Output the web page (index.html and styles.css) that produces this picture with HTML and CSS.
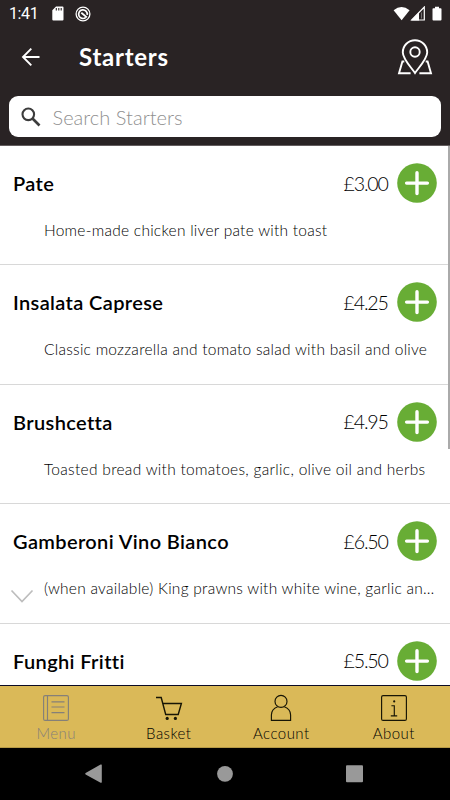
FILE: index.html
```html
<!DOCTYPE html>
<html lang="en">
<head>
<meta charset="utf-8">
<title>Starters</title>
<link rel="stylesheet" href="styles.css">
</head>
<body>
<svg class="defs" width="0" height="0" aria-hidden="true">
  <symbol id="plus" viewBox="0 0 40 40"><circle cx="20" cy="20" r="19.8" fill="#68ad35"/><path d="M20 9.7v20.8M9.6 20.1h20.8" stroke="#fff" stroke-width="3.4" stroke-linecap="round"/></symbol>
</svg>
<div class="app">
  <header class="top">
    <div class="status">
      <span class="clock">1:41</span>
      <svg class="sd" width="12" height="15" viewBox="0 0 12 15"><path d="M4 .4h6.5a1 1 0 0 1 1 1v12a1 1 0 0 1-1 1H1.3a1 1 0 0 1-1-1V4.3z" fill="#fff"/><path d="M4.3 2v2.6M6.8 2v2.6M9.2 2v2.6" stroke="#292324" stroke-width="1.1"/></svg>
      <svg class="ring" width="16" height="16" viewBox="0 0 16 16" fill="none" stroke="#fff"><circle cx="8" cy="8" r="6.9" stroke-width="1.3"/><path d="M10.8 11.4A4.3 4.3 0 1 1 12.2 8.8" stroke-width="1.7"/><path d="M6.3 6.8l5.6 4.6" stroke-width="1.8"/></svg>
      <svg class="signals" width="50" height="16" viewBox="0 0 50 16"><path d="M.6 4.3Q8.5-2.5 16.6 4.3L8.6 14.2z" fill="#fff"/><path d="M18.7 14L31.3 1V14z" fill="none" stroke="#fff" stroke-width="1.2"/><path d="M18 14.5L26 6.2V14.5z" fill="#fff"/><path d="M28.4 6.5v6" stroke="#fff" stroke-width=".8" opacity=".5"/><path d="M42 .8h4v1.4h1.6a.9.9 0 0 1 .9.9v10.5a.9.9 0 0 1-.9.9h-7.2a.9.9 0 0 1-.9-.9V3.1a.9.9 0 0 1 .9-.9H42z" fill="#fff"/></svg>
    </div>
    <div class="bar">
      <svg class="back" width="20" height="20" viewBox="0 0 20 20" fill="none" stroke="#fff" stroke-width="1.9"><path d="M18.5 10H2.5M10.3 1.6L2 10l8.3 8.4"/></svg>
      <h1>Starters</h1>
      <svg class="map" width="36" height="36" viewBox="0 0 36 36" fill="none" stroke="#fff" stroke-width="1.9"><path d="M18 34C14.3 28.5 5.8 19.8 5.8 13.4a12.2 12.2 0 0 1 24.4 0C30.2 19.8 21.7 28.5 18 34z"/><circle cx="18" cy="13" r="4.7"/><path d="M7.3 22.5H5.4L2 34.3h11.6M28.7 22.5h1.9L34 34.3H22.4"/></svg>
    </div>
    <div class="search">
      <svg width="20" height="20" viewBox="0 0 20 20" fill="none" stroke="#3c3c3c"><circle cx="7.3" cy="7.3" r="5.8" stroke-width="2.1"/><path d="M11.5 11.5L18.5 18.5" stroke-width="2.6"/></svg>
      <span>Search Starters</span>
    </div>
  </header>
  <main class="list">
    <article class="item">
      <div class="head"><h2>Pate</h2><span class="price">£3.00</span><svg class="add"><use href="#plus"/></svg></div>
      <p>Home-made chicken liver pate with toast</p>
    </article>
    <article class="item">
      <div class="head"><h2>Insalata Caprese</h2><span class="price">£4.25</span><svg class="add"><use href="#plus"/></svg></div>
      <p>Classic mozzarella and tomato salad with basil and olive</p>
    </article>
    <article class="item">
      <div class="head"><h2>Brushcetta</h2><span class="price">£4.95</span><svg class="add"><use href="#plus"/></svg></div>
      <p class="wide">Toasted bread with tomatoes, garlic, olive oil and herbs</p>
    </article>
    <article class="item">
      <div class="head"><h2>Gamberoni Vino Bianco</h2><span class="price">£6.50</span><svg class="add"><use href="#plus"/></svg></div>
      <p>(when available) King prawns with white wine, garlic an…</p>
      <svg class="more" width="24" height="15" viewBox="0 0 24 15"><path d="M1.5 1.5L12 12.5 22.5 1.5" fill="none" stroke="#bdbdbd" stroke-width="1.7"/></svg>
    </article>
    <article class="item">
      <div class="head"><h2>Funghi Fritti</h2><span class="price">£5.50</span><svg class="add"><use href="#plus"/></svg></div>
    </article>
    <i class="scroll"></i>
  </main>
  <nav class="tabs">
    <div class="tab off"><svg viewBox="0 0 28 28"><rect x="1.6" y="1.6" width="24.8" height="24.8" rx="1.5"/><path d="M5.5 1.6v24.8M9.5 7.8h13M9.5 13h13M9.5 18.6h13"/></svg><span>Menu</span></div>
    <div class="tab"><svg viewBox="0 0 28 28"><path stroke-width="1.4" d="M1 3.5h5.2l4.5 17H23.2l3.2-11H7.8"/><circle cx="12.2" cy="24.4" r="1.6" class="dot"/><circle cx="20.4" cy="24.4" r="1.6" class="dot"/></svg><span>Basket</span></div>
    <div class="tab"><svg viewBox="0 0 28 28"><circle cx="14" cy="7.4" r="6"/><path d="M10.7 12.7C6.5 14.2 4.4 17.3 4.4 21v5.3h19.2V21c0-3.7-2.1-6.8-6.3-8.3"/></svg><span>Account</span></div>
    <div class="tab"><svg viewBox="0 0 28 28"><rect x="1.6" y="1.6" width="24.8" height="24.8" rx="1.5"/><path d="M11.4 11.7h2.9v10.1M10.8 21.9h6.4"/><circle cx="14.2" cy="7.4" r="1.1" class="dot"/></svg><span>About</span></div>
  </nav>
  <footer class="system">
    <svg width="450" height="52" viewBox="0 0 450 52" fill="#999"><path d="M85.6 25.1L100.6 16.6a.8.8 0 0 1 1.2.7V34a.8.8 0 0 1-1.2.7L85.6 26.4a.8.8 0 0 1 0-1.3z"/><circle cx="225" cy="25.8" r="7.9"/><rect x="346" y="17.2" width="17" height="17" rx="1"/></svg>
  </footer>
</div>
</body>
</html>
```

FILE: styles.css
```css
* { box-sizing: border-box; margin: 0; padding: 0; }
body { width: 450px; height: 800px; overflow: hidden; background: #fff; color: #000; font-family: Lato, "Noto Sans", sans-serif; }
svg { display: block; flex: none; }
.defs { position: absolute; }
.app { display: flex; flex-direction: column; height: 800px; }
.top { flex: none; height: 146px; background: #292324; border-bottom: 1px solid #625c5d; color: #fff; }
.status { display: flex; align-items: center; height: 27px; padding: 0 0 0 9px; }
.clock { width: 43px; font: 400 16px/26px Roboto, sans-serif; letter-spacing: -.4px; }
.ring { margin-left: 11px; }
.signals { margin-left: auto; margin-right: 7px; }
.bar { display: flex; align-items: center; height: 60px; padding: 0 17px 0 21px; }
h1 { margin-left: 38px; font-size: 24px; line-height: 30px; font-weight: 700; letter-spacing: .75px; }
.map { margin-left: auto; }
.search { display: flex; align-items: center; height: 41px; margin: 9px 9px 0 8.5px; padding-left: 12px; border-radius: 9px; background: #fff; color: #909090; }
.search span { margin-left: 12px; font-size: 20px; font-weight: 300; letter-spacing: .03px; }
.list { position: relative; flex: 1; min-height: 0; overflow: hidden; }
.item { position: relative; height: 119.5px; border-bottom: 1.5px solid #d8d8d8; padding: 17px 13px 0; }
.item:first-child { height: 119.3px; }
.head { display: flex; align-items: center; height: 40px; }
h2 { flex: 1; font-size: 20px; line-height: 26px; font-weight: 600; letter-spacing: .37px; }
.price { margin-right: 10.2px; font-size: 19.6px; font-weight: 300; letter-spacing: -1.2px; }
.head .price { margin-right: 9.4px; }
.add { width: 40px; height: 40px; }
.item p { margin: 16.8px -8px 0 31px; font-size: 15.5px; line-height: 20px; font-weight: 300; letter-spacing: .26px; white-space: nowrap; }
.item p.wide { letter-spacing: .3px; }
.more { position: absolute; left: 10px; top: 85px; }
.scroll { position: absolute; right: 0; top: 0; width: 2px; height: 303px; background: #aaa; }
.tabs { flex: none; display: grid; grid-template-columns: repeat(4, 1fr); height: 63px; background: #dab958; border-top: 1px solid #0b0b25; border-bottom: 1px solid #b69a46; }
.tab { display: flex; flex-direction: column; align-items: center; padding-top: 8px; font-size: 15px; font-weight: 300; line-height: 20px; letter-spacing: .45px; }
.tab svg { width: 28px; height: 28px; margin-bottom: 1px; fill: none; stroke: #171505; stroke-width: 1.15; }
.tab .dot { fill: #171505; stroke: none; }
.tab.off { color: #858078; }
.tab.off svg { stroke: #858078; }
.system { flex: none; height: 52px; background: #000; }
```
